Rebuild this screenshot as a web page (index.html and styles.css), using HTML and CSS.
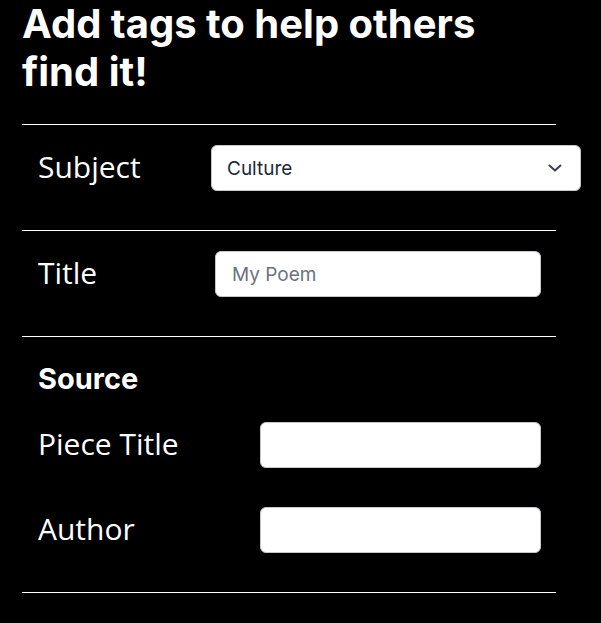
FILE: index.html
```html
<!DOCTYPE html>
<html lang="en">
<head>
<meta charset="utf-8">
<title>Add tags</title>
<link rel="stylesheet" href="styles.css">
</head>
<body>
<main class="panel">
  <h1 class="heading">Add tags to help others find it!</h1>

  <section class="row">
    <label class="label label-subject" for="subject">Subject</label>
    <div class="select-wrap">
      <select id="subject" class="field select">
        <option>Culture</option>
      </select>
      <svg class="chevron" width="14" height="8" viewBox="0 0 14 8" aria-hidden="true">
        <path d="M1.5 1.5 L7 6.5 L12.5 1.5" fill="none" stroke="#374151" stroke-width="2" stroke-linecap="round" stroke-linejoin="round"/>
      </svg>
    </div>
  </section>

  <section class="row">
    <label class="label label-title" for="title">Title</label>
    <input id="title" class="field input-title" type="text" placeholder="My Poem">
  </section>

  <section class="row row-last">
    <h2 class="source-heading">Source</h2>
    <div class="sub-row">
      <label class="label label-source" for="piece">Piece Title</label>
      <input id="piece" class="field input-source" type="text">
    </div>
    <div class="sub-row">
      <label class="label label-source" for="author">Author</label>
      <input id="author" class="field input-source" type="text">
    </div>
  </section>
</main>
</body>
</html>
```

FILE: styles.css
```css
html, body {
  margin: 0;
  padding: 0;
  background: #000;
  color: #fff;
}

.panel {
  margin-left: 22px;
  width: 534px;
}

.heading {
  margin: 0 0 28px 0;
  font-family: Inter, "Noto Sans", sans-serif;
  font-weight: 700;
  font-size: 40px;
  line-height: 48px;
  max-width: 500px;
}

.row {
  border-top: 1px solid #fff;
  padding: 20px 15px 39px 16px;
  display: flex;
  align-items: center;
}

.row-last {
  display: block;
  border-bottom: 1px solid #fff;
}

.label {
  font-family: "Open Sans", "Noto Sans", sans-serif;
  font-size: 30px;
  line-height: 40px;
  flex-shrink: 0;
  margin-top: -2px;
}

.label-subject { width: 173px; }
.label-title { width: 177px; }
.label-source { width: 222px; }

.field {
  box-sizing: border-box;
  height: 46px;
  border: 1px solid #c4c7cc;
  border-radius: 6px;
  background: #fff;
  font-family: Inter, "Noto Sans", sans-serif;
  font-size: 19px;
  color: #1f2937;
  margin: 0;
  outline: none;
}

.select-wrap {
  position: relative;
  flex-shrink: 0;
}

.select {
  appearance: none;
  -webkit-appearance: none;
  width: 370px;
  padding: 0 40px 0 15px;
  display: block;
}

.chevron {
  position: absolute;
  right: 19px;
  top: 19px;
}

.input-title {
  width: 326px;
  padding: 0 16px;
}

.input-source {
  width: 281px;
  padding: 0 16px;
}

.field::placeholder {
  color: #6b7280;
  opacity: 1;
}

.source-heading {
  margin: 2px 0 23px 0;
  font-family: Inter, "Noto Sans", sans-serif;
  font-weight: 700;
  font-size: 29px;
  line-height: 40px;
}

.sub-row {
  display: flex;
  align-items: center;
}

.sub-row + .sub-row {
  margin-top: 39px;
}
```
